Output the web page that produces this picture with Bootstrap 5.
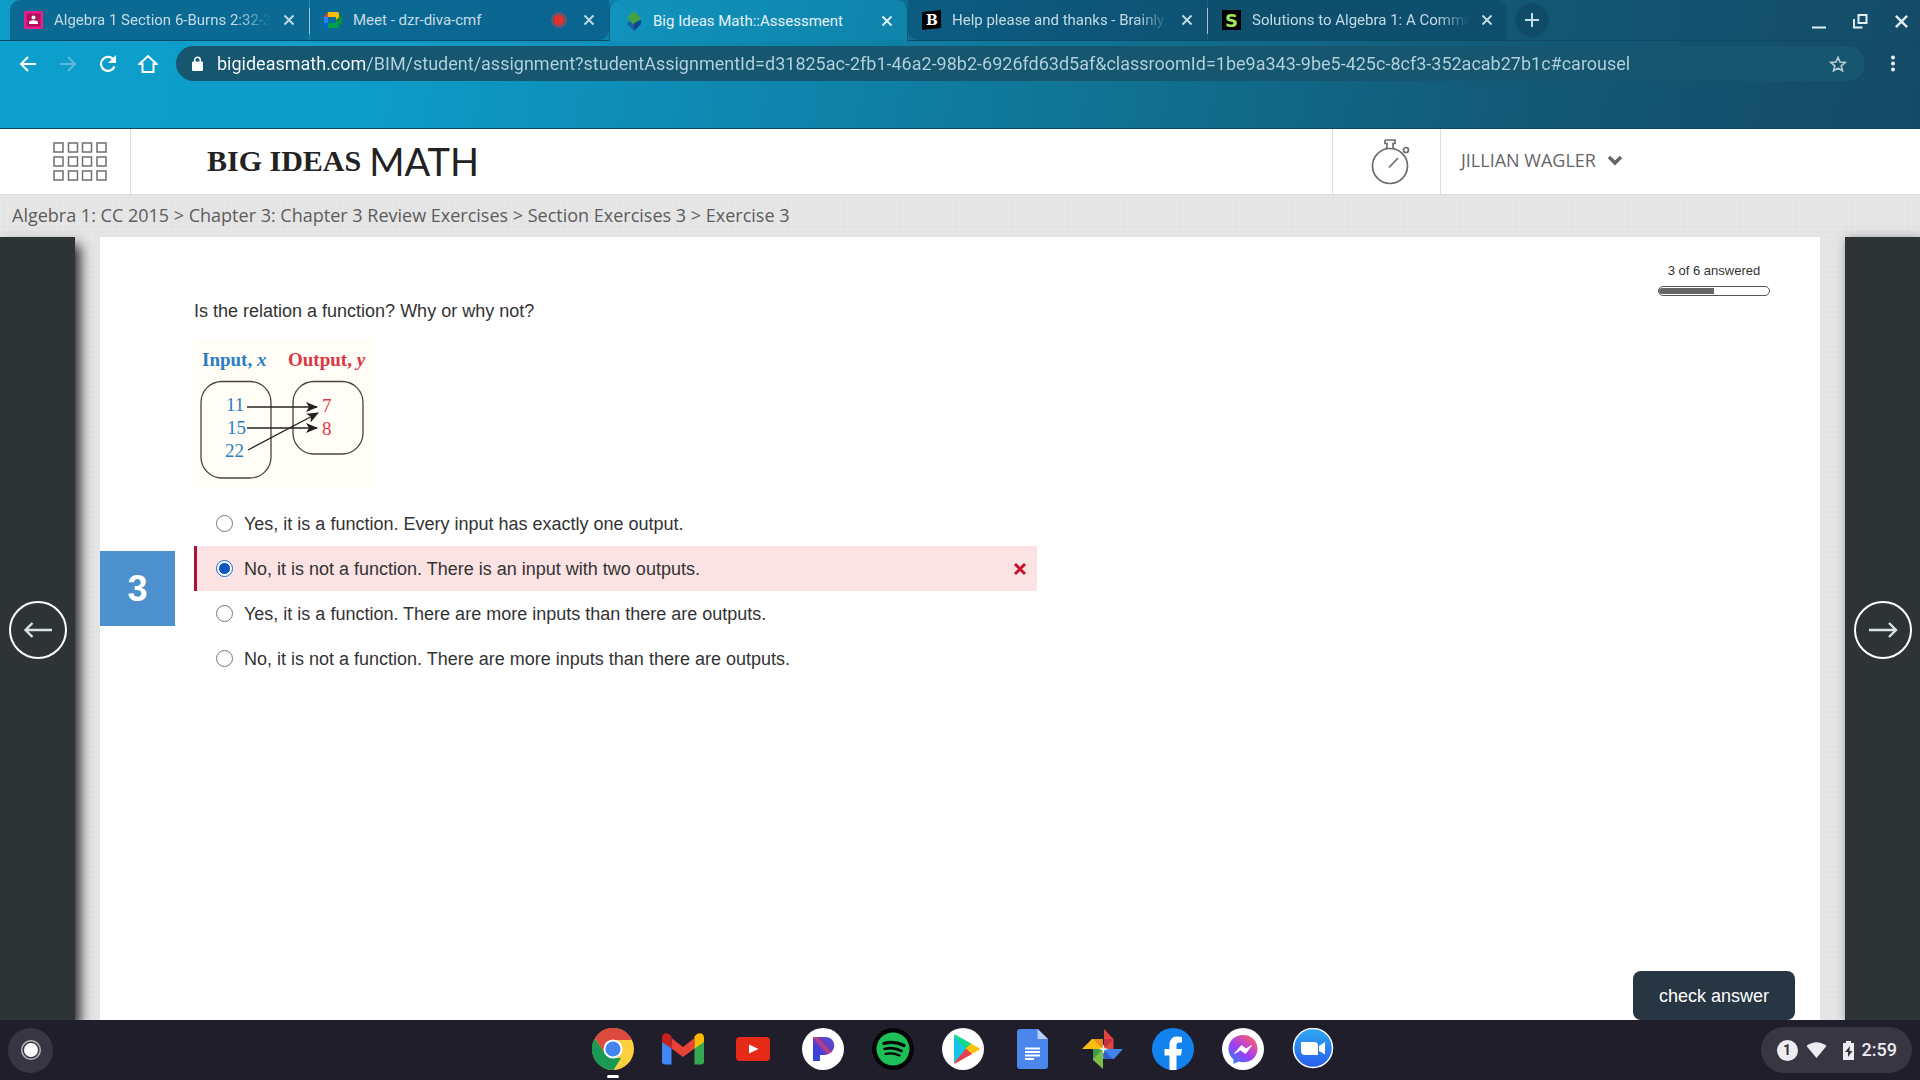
<!DOCTYPE html>
<html lang="en">
<head>
<meta charset="utf-8">
<meta name="viewport" content="width=device-width, initial-scale=1">
<title>Big Ideas Math::Assessment</title>
<link href="https://cdn.jsdelivr.net/npm/bootstrap@5.3.0/dist/css/bootstrap.min.css" rel="stylesheet">
<style>
  body { font-family: "Liberation Sans", Arial, sans-serif; font-size: 18px; line-height: 24px; color: #333; background: #fff; }
  svg { display: block; flex: none; }
  button { border: 0; background: none; padding: 0; color: inherit; }

  /* browser frame */
  .browser { font-family: Roboto, sans-serif; background: linear-gradient(100deg, #0d9fcc 0%, #0d9cc8 20%, #0f86ae 40%, #10708f 60%, #125a78 78%, #144a66 100%); border-bottom: 1px solid #12465c; }
  .tabstrip { height: 41px; padding-left: 10px; background: linear-gradient(90deg, rgba(20,80,110,.05), rgba(20,80,110,.35) 50%, rgba(20,80,110,.2)); border-bottom: 1px solid #0d4a66; }
  .tab-item { flex: 0 1 299px; min-width: 0; height: 40px; padding: 0 14px; background: #0b6a94; color: #c3dce6; }
  .tab-item.first { border-top-left-radius: 10px; }
  .tab-item.t-two { background: linear-gradient(90deg, #0b6a94, #0a6590); border-radius: 0 0 10px 0; }
  .tab-item.t-four { background: linear-gradient(90deg, #0c5c82, #0e5273); border-bottom-left-radius: 10px; }
  .tab-item.t-five { background: #0e4f6d; border-top-right-radius: 10px; }
  .tab-item.current { height: 41px; margin-bottom: -1px; padding-left: 16px; background: linear-gradient(100deg, #1093bd, #0f83aa); color: #e3f2f8; border-radius: 10px 10px 0 0; border: solid #0b5b7c; border-width: 0 1px; }
  .tab-link { flex: 1 1 0; min-width: 0; color: inherit; text-decoration: none; font-size: 15px; line-height: 20px; white-space: nowrap; margin-left: 11px; margin-right: 12px; }
  .tab-link.faded { -webkit-mask-image: linear-gradient(90deg, #000 85%, transparent); mask-image: linear-gradient(90deg, #000 85%, transparent); }
  .tab-rule { width: 1px; height: 26px; margin-top: 8px; background: #9fc3d1; }
  .newtab { width: 34px; height: 34px; margin: 3px 0 0 8px; border-radius: 50%; background: #0f4c68; }
  .win-controls { gap: 26px; margin-right: 11px; padding-top: 2px; color: #e0edf2; }
  .toolbar { height: 87px; padding: 5px 23px 0 18px; color: #fff; }
  .nav-icons { gap: 20px; height: 35px; margin-right: 18px; }
  .omnibox { height: 35px; border-radius: 18px; background: #17566f; padding: 0 18px 0 12px; }
  .url-field { flex: 1; min-width: 0; border: 0; outline: 0; padding: 0; margin-left: 14px; font-size: 18px; line-height: 24px; color: #b4d3df; -webkit-text-fill-color: transparent; background: linear-gradient(90deg, #fff 149px, #b4d3df 149px); -webkit-background-clip: text; background-clip: text; }

  /* site header */
  .site-header { height: 66px; background: #fff; border-bottom: 1px solid #ddd; font-family: "Open Sans", sans-serif; color: #666; }
  .apps-cell { width: 131px; border-right: 1px solid #ddd; padding-right: 0; padding-left: 30px; }
  .logo { margin-left: 76px; color: #222; text-decoration: none; padding-bottom: 2px; }
  .logo-serif { font: bold 30px/40px "Liberation Serif", serif; }
  .logo-sans { font: 400 38px/40px Lato, sans-serif; margin-left: 8px; }
  .timer-cell { width: 109px; border: solid #ddd; border-width: 0 1px; padding-left: 8px; }
  .user-cell { width: 479px; padding-left: 20px; padding-bottom: 4px; }
  .user-btn { font-size: 18px; line-height: 24px; color: #666; gap: 10px; }
  .trail { height: 42px; padding: 0 12px 2px; font-family: "Open Sans", sans-serif; font-size: 18px; color: #5c5c5c; }

  /* exercise area */
  .linen { background-color: #e4e4e4; background-image: repeating-linear-gradient(0deg, rgba(255,255,255,.1) 0 1px, transparent 1px 5px), repeating-linear-gradient(90deg, rgba(255,255,255,.1) 0 1px, transparent 1px 7px); }
  .side { width: 75px; padding-top: 2px; background: #2e3336; box-shadow: 5px 8px 12px #222; }
  .side-next { box-shadow: 2px 2px 10px rgba(60,65,75,.6); }
  .sheet { margin: 0 25px; background: #fff; }
  .num { width: 75px; height: 75px; margin-top: 314px; background: #4c90cd; color: #fff; font-size: 36px; font-weight: bold; }
  .work { margin-left: 19px; padding-top: 62px; }
  .figure-box { margin: 16px 0 13px; }
  .answers { width: 843px; max-width: 100%; }
  .answer { height: 45px; padding: 0 10px 0 19px; border-left: 3px solid transparent; }
  .answer.wrong { background: #fbe2e3; border-left-color: #a9123a; }
  .answer input { appearance: none; width: 17px; height: 17px; margin: 0 11px 0 0; border: 1px solid #767676; border-radius: 50%; background: #fff; flex: none; }
  .answer input:checked { border: 1px solid #1a6ad0; background: radial-gradient(circle, #0b57c0 5px, #fff 6px); }
  .tally { width: 112px; margin: 24px 50px 0 0; font-size: 13px; line-height: 20px; }
  .tally-bar { height: 10px; margin-top: 5px; border: 1px solid #555; border-radius: 5px; background: #fff; padding: 1px 0; }
  .tally-fill { background: #666; border-radius: 4px 0 0 4px; height: 100%; }
  .check-btn { width: 162px; height: 49px; margin-right: 25px; border-radius: 8px; background: #273642; color: #fff; }

  /* shelf */
  .shelf { height: 60px; padding: 0 8px; background: #201e2b; font-family: Roboto, sans-serif; }
  .launcher { width: 45px; height: 45px; border-radius: 50%; background: #393644; }
  .dock { gap: 28px; height: 60px; padding-left: 6px; padding-bottom: 2px; }
  .running { width: 12px; height: 3px; border-radius: 2px; background: #fff; left: 15px; top: 47px; }
  .tray { height: 46px; border-radius: 23px; background: #393644; color: #eeecf2; padding: 0 15px 0 16px; font-size: 18px; font-weight: 500; }
  .count { width: 21px; height: 21px; border-radius: 50%; background: #eeecf2; color: #333; font-size: 14px; line-height: 21px; font-weight: 700; }
</style>
<script src="https://cdn.jsdelivr.net/npm/bootstrap@5.3.0/dist/js/bootstrap.bundle.min.js"></script>
</head>
<body class="d-flex flex-column min-vh-100">

<svg width="0" height="0" class="position-absolute" aria-hidden="true">
  <symbol id="close" viewBox="0 0 12 12"><path d="M1.5 1.5l9 9M10.500 1.500l-9 9" stroke="currentColor" stroke-width="1.900"/></symbol>
</svg>

<header class="browser">
  <div class="tabstrip d-flex">
    <div class="tab-item first d-flex align-items-center">
      <svg width="19" height="18" viewBox="0 0 19 18"><rect width="19" height="18" rx="1" fill="#e91e8c"/><rect x="2.500" y="2.500" width="14" height="13" fill="#b0105f"/><circle cx="9.500" cy="6.500" r="2" fill="#fff"/><path d="M5 13v-1.500c0-3 9-3 9 0V13z" fill="#fff"/></svg>
      <a class="tab-link faded" href="#">Algebra 1 Section 6-Burns 2:32-3</a>
      <button aria-label="Close tab"><svg width="12" height="12"><use href="#close"/></svg></button>
    </div>
    <div class="tab-rule"></div>
    <div class="tab-item t-two d-flex align-items-center">
      <svg width="18" height="18" viewBox="0 0 18 18"><path d="M4 1h9a2 2 0 0 1 2 2v4l-3 2V6H4z" fill="#fbbc04"/><path d="M4 1v5H0z" fill="#ea4335"/><path d="M0 6h4v6H0z" fill="#2684fc"/><path d="M0 12h4v5H2a2 2 0 0 1-2-2z" fill="#0066da"/><path d="M4 12h8V9l3 2v4a2 2 0 0 1-2 2H4z" fill="#00a04a"/><path d="M12 9l5-5q1 0 1 1v8q0 1-1 1z" fill="#168a3c"/></svg>
      <a class="tab-link" href="#">Meet - dzr-diva-cmf</a>
      <svg class="me-3" width="16" height="16" viewBox="0 0 16 16"><circle cx="8" cy="8" r="7" fill="none" stroke="#8c5060" stroke-width="1.500"/><circle cx="8" cy="8" r="5.500" fill="#e0322a"/></svg>
      <button aria-label="Close tab"><svg width="12" height="12"><use href="#close"/></svg></button>
    </div>
    <div class="tab-item current d-flex align-items-center">
      <svg width="16" height="20" viewBox="0 0 16 20"><path d="M8 6l7 7-7 7-7-7z" fill="#1560a8"/><path d="M8 0l7 7-7 7-7-7z" fill="#45a243"/><path d="M8 12l7-3v4l-7 7z" fill="#0c4a8c"/></svg>
      <a class="tab-link" href="#" aria-current="page">Big Ideas Math::Assessment</a>
      <button aria-label="Close tab"><svg width="12" height="12"><use href="#close"/></svg></button>
    </div>
    <div class="tab-item t-four d-flex align-items-center">
      <svg width="19" height="20" viewBox="0 0 19 20"><path d="M0 2L19 0v18L0 20z" fill="#000"/><text x="4" y="15" font-family="DejaVu Serif" font-weight="bold" font-size="14" fill="#fff">B</text></svg>
      <a class="tab-link faded" href="#">Help please and thanks - Brainly.c</a>
      <button aria-label="Close tab"><svg width="12" height="12"><use href="#close"/></svg></button>
    </div>
    <div class="tab-rule"></div>
    <div class="tab-item t-five d-flex align-items-center">
      <svg width="19" height="20" viewBox="0 0 19 20"><path d="M0 0h19v20H0z" fill="#000"/><text x="3" y="17" font-family="DejaVu Sans" font-weight="bold" font-size="18" fill="#a5e65a">S</text></svg>
      <a class="tab-link faded" href="#">Solutions to Algebra 1: A Commo</a>
      <button aria-label="Close tab"><svg width="12" height="12"><use href="#close"/></svg></button>
    </div>
    <button class="newtab d-flex align-items-center justify-content-center" aria-label="New tab"><svg width="16" height="16" viewBox="0 0 16 16"><path d="M8 1v14M1 8h14" stroke="#c7dde6" stroke-width="2"/></svg></button>
    <div class="win-controls d-flex align-items-center ms-auto">
      <button aria-label="Minimize"><svg width="15" height="15" viewBox="0 0 15 15"><path d="M0 13.500h14" stroke="currentColor" stroke-width="2"/></svg></button>
      <button aria-label="Restore"><svg width="15" height="15" viewBox="0 0 15 15"><path d="M5.500 1h8v8h-8zM1 5v8.500h8.500" fill="none" stroke="currentColor" stroke-width="2"/></svg></button>
      <button aria-label="Close window"><svg width="15" height="15" viewBox="0 0 12 12"><use href="#close" width="12" height="12"/></svg></button>
    </div>
  </div>

  <div class="toolbar d-flex">
    <div class="nav-icons d-flex align-items-center">
      <button aria-label="Back"><svg width="20" height="20" viewBox="0 0 20 20" fill="none" stroke="#fff" stroke-width="2"><path d="M18 10H3M10 3l-7 7 7 7"/></svg></button>
      <button aria-label="Forward"><svg width="20" height="20" viewBox="0 0 20 20" fill="none" stroke="#5db9d9" stroke-width="2"><path d="M2 10h15M10 3l7 7-7 7"/></svg></button>
      <button aria-label="Reload"><svg width="20" height="20" viewBox="0 0 20 20"><path d="M16.500 12.500A7 7 0 1 1 15 5" fill="none" stroke="#fff" stroke-width="2.200"/><path d="M18 1v8h-8z" fill="#fff"/></svg></button>
      <button aria-label="Home"><svg width="20" height="20" viewBox="0 0 20 20"><path d="M1.500 10L10 2l8.500 8H15.500v8h-11v-8z" fill="none" stroke="#fff" stroke-width="2"/></svg></button>
    </div>
    <div class="omnibox d-flex align-items-center flex-grow-1">
      <svg class="ms-1" width="11" height="16" viewBox="0 0 11 16"><rect y="5.500" width="11" height="9.500" rx="1.200" fill="#fff"/><path d="M2.700 6V4a2.800 2.800 0 0 1 5.600 0v2" fill="none" stroke="#fff" stroke-width="1.500"/></svg>
      <input class="url-field" type="text" aria-label="Address" value="bigideasmath.com/BIM/student/assignment?studentAssignmentId=d31825ac-2fb1-46a2-98b2-6926fd63d5af&amp;classroomId=1be9a343-9be5-425c-8cf3-352acab27b1c#carousel">
      <button class="ms-2" aria-label="Bookmark"><svg width="18" height="18" viewBox="0 0 24 24"><path d="M12 3l2.700 6.300 6.800.6-5.200 4.500 1.600 6.700L12 17.500l-5.900 3.600 1.600-6.700L2.500 9.900l6.800-.6z" fill="none" stroke="#b9cdd5" stroke-width="2.200"/></svg></button>
    </div>
    <button class="ms-4 align-self-start" aria-label="Menu"><svg width="8" height="35" viewBox="0 0 8 35" fill="#e8f3f7"><circle cx="4" cy="11.500" r="2"/><circle cx="4" cy="17.500" r="2"/><circle cx="4" cy="23.500" r="2"/></svg></button>
  </div>
</header>

<div class="site-header d-flex">
  <div class="apps-cell d-flex align-items-center justify-content-center">
    <button aria-label="Programs"><svg width="54" height="40" viewBox="0 0 54 40" fill="none" stroke="#6f6f6f" stroke-width="1.500"><path d="M1 1h9v9H1zM15.500 1h9v9h-9zM29.500 1h9v9h-9zM44 1h9v9h-9zM1 15h9v9H1zM15.500 15h9v9h-9zM29.500 15h9v9h-9zM44 15h9v9h-9zM1 29h9v9H1zM15.500 29h9v9h-9zM29.500 29h9v9h-9zM44 29h9v9h-9z"/></svg></button>
  </div>
  <a class="logo d-flex align-items-center" href="#"><span class="logo-serif">BIG IDEAS</span><span class="logo-sans">MATH</span></a>
  <div class="timer-cell d-flex align-items-center justify-content-center ms-auto">
    <button aria-label="Timer"><svg width="40" height="46" viewBox="0 0 40 46" fill="none" stroke="#6c6c6c" stroke-width="1.700"><circle cx="19" cy="27" r="17.500"/><path d="M14 1h10v3.500h-2V8q0 1 1.500 2M14 1v3.500h2V8q0 1-1.500 2M18 28.500l9-9.500"/><circle cx="35" cy="11" r="2.500"/></svg></button>
  </div>
  <div class="user-cell d-flex align-items-center">
    <button class="user-btn d-flex align-items-center">JILLIAN WAGLER<svg width="18" height="12" viewBox="0 0 18 12"><path d="M3 3l6 6 6-6" fill="none" stroke="#666" stroke-width="3.500"/></svg></button>
  </div>
</div>

<main class="linen d-flex flex-column flex-grow-1 overflow-hidden">
  <div class="trail d-flex align-items-center">Algebra 1: CC 2015 &gt; Chapter 3: Chapter 3 Review Exercises &gt; Section Exercises 3 &gt; Exercise 3</div>
  <div class="d-flex flex-grow-1">
    <div class="side d-flex align-items-center justify-content-center flex-shrink-0">
      <button aria-label="Previous exercise"><svg width="58" height="58" viewBox="0 0 58 58" fill="none" stroke="#fff" stroke-width="2"><circle cx="29" cy="29" r="28"/><path d="M43 29H16M23.500 22l-7 7 7 7" stroke="#dde3e4" stroke-width="2.400"/></svg></button>
    </div>
    <section class="sheet d-flex flex-grow-1">
      <div class="num d-flex align-items-center justify-content-center flex-shrink-0">3</div>
      <div class="work flex-grow-1">
        <div>Is the relation a function? Why or why not?</div>
        <svg class="figure-box" width="181" height="149" viewBox="0 0 181 149" role="img" aria-label="Mapping diagram from inputs to outputs">
          <defs><marker id="tip" viewBox="0 0 12 10" refX="11" refY="5" markerWidth="12" markerHeight="10" markerUnits="userSpaceOnUse" orient="auto"><path d="M0 0l12 5-12 5 3-5z" fill="#222"/></marker></defs>
          <rect width="181" height="149" fill="#fffdf6"/>
          <g font-family="Liberation Serif" font-weight="bold" font-size="19">
            <text x="8" y="27" fill="#2a7fc4">Input, <tspan font-style="italic">x</tspan></text>
            <text x="94" y="27" fill="#dc3545">Output, <tspan font-style="italic">y</tspan></text>
          </g>
          <g fill="none" stroke="#444" stroke-width="1.300">
            <rect x="7" y="42.500" width="70" height="96.500" rx="21"/>
            <rect x="99" y="42.500" width="70" height="72.500" rx="21"/>
          </g>
          <g font-family="Liberation Serif" font-size="19">
            <g fill="#2a7fc4"><text x="32" y="72">11</text><text x="33" y="95">15</text><text x="31" y="118">22</text></g>
            <g fill="#dc3545"><text x="128" y="73">7</text><text x="128" y="96">8</text></g>
          </g>
          <g stroke="#222" stroke-width="1.300"><path d="M53 68h70" marker-end="url(#tip)"/><path d="M53 89h70" marker-end="url(#tip)"/><path d="M54 111L124 74" marker-end="url(#tip)"/></g>
        </svg>
        <div class="answers">
          <label class="answer d-flex align-items-center"><input type="radio" name="answer">Yes, it is a function. Every input has exactly one output.</label>
          <label class="answer wrong d-flex align-items-center"><input type="radio" name="answer" checked>No, it is not a function. There is an input with two outputs.<svg class="ms-auto" width="14" height="14" viewBox="0 0 14 14"><path d="M2 2l10 10M12 2L2 12" stroke="#c4122f" stroke-width="3"/></svg></label>
          <label class="answer d-flex align-items-center"><input type="radio" name="answer">Yes, it is a function. There are more inputs than there are outputs.</label>
          <label class="answer d-flex align-items-center"><input type="radio" name="answer">No, it is not a function. There are more inputs than there are outputs.</label>
        </div>
      </div>
      <div class="d-flex flex-column align-items-end flex-shrink-0">
        <div class="tally text-center">3 of 6 answered
          <div class="tally-bar" role="progressbar" aria-label="Answered" aria-valuenow="3" aria-valuemin="0" aria-valuemax="6"><div class="tally-fill" style="width:50%"></div></div>
        </div>
        <button class="check-btn mt-auto">check answer</button>
      </div>
    </section>
    <div class="side side-next d-flex align-items-center justify-content-center flex-shrink-0">
      <button aria-label="Next exercise"><svg width="58" height="58" viewBox="0 0 58 58" fill="none" stroke="#fff" stroke-width="2"><circle cx="29" cy="29" r="28"/><path d="M15 29h27M35 22l7 7-7 7" stroke="#dde3e4" stroke-width="2.400"/></svg></button>
    </div>
  </div>
</main>

<footer class="shelf d-flex align-items-center position-relative">
  <div class="col d-flex"><button class="launcher d-flex align-items-center justify-content-center" aria-label="Launcher"><svg width="22" height="22" viewBox="0 0 22 22"><circle cx="11" cy="11" r="9.300" fill="none" stroke="#b8b6be" stroke-width="1.500"/><circle cx="11" cy="11" r="7" fill="#fff"/></svg></button></div>
  <nav class="dock d-flex align-items-center" aria-label="Apps">
    <a href="#" aria-label="Chrome" class="position-relative">
      <svg width="42" height="42" viewBox="0 0 42 42"><circle cx="21" cy="21" r="21" fill="#fdd03f"/><path d="M2.800 10.500A21 21 0 0 1 39.200 10.500L39.800 12H21l-7.800 13.500z" fill="#dc4a3d"/><path d="M2.800 10.500L13.200 25.500 21 30h8L21.500 42A21 21 0 0 1 2.800 10.500z" fill="#1a9a55"/><circle cx="21" cy="21" r="9.500" fill="#fff"/><circle cx="21" cy="21" r="7.600" fill="#4484ee"/></svg>
      <span class="running position-absolute"></span>
    </a>
    <a href="#" aria-label="Gmail"><svg width="42" height="42" viewBox="0 0 42 42"><path d="M0 14v19.500q0 3 3 3h6.500V17z" fill="#4285f4"/><path d="M42 14v19.500q0 3-3 3h-6.500V17z" fill="#34a853"/><path d="M9.500 10L21 19l11.500-9v10.500L21 29 9.500 20.500z" fill="#ea4335"/><path d="M0 9.500C0 5.500 4.500 4 7.500 6.500l2 2v12L0 14z" fill="#c5221f"/><path d="M42 9.500c0-4-4.500-5.500-7.500-3l-2 2v12L42 14z" fill="#fbbc04"/></svg></a>
    <a href="#" aria-label="YouTube"><svg width="42" height="42" viewBox="0 0 42 42"><rect x="4" y="9" width="34" height="24" rx="4" fill="#e62a18"/><path d="M17 16.500l9.500 4.500-9.500 4.500z" fill="#fff"/></svg></a>
    <a href="#" aria-label="Pandora"><svg width="42" height="42" viewBox="0 0 42 42"><defs><linearGradient id="pan" x1="0" y1="1" x2="1" y2="0"><stop offset="0" stop-color="#2546e0"/><stop offset=".42" stop-color="#4b3fd5"/><stop offset=".55" stop-color="#c8407e"/><stop offset=".65" stop-color="#6a3cbf"/><stop offset="1" stop-color="#3f5be0"/></linearGradient></defs><circle cx="21" cy="21" r="21" fill="#fff"/><path d="M11 9h12c13 0 12 18-1 18h-4v6h-7z" fill="url(#pan)"/></svg></a>
    <a href="#" aria-label="Spotify"><svg width="42" height="42" viewBox="0 0 42 42"><circle cx="21" cy="21" r="21" fill="#050505"/><circle cx="21" cy="21" r="16.500" fill="#1fbf58"/><g fill="none" stroke="#050505" stroke-linecap="round"><path d="M12 15.500q10-3 20 2" stroke-width="3.200"/><path d="M12.500 21q9-2.500 17 2" stroke-width="2.600"/><path d="M13.500 26q7-2 14 1.500" stroke-width="2.200"/></g></svg></a>
    <a href="#" aria-label="Play Store"><svg width="42" height="42" viewBox="0 0 42 42"><circle cx="21" cy="21" r="21" fill="#fff"/><path d="M12 7v28l13-14z" fill="#13c6ea"/><path d="M12 7q1-1 3 .5L30 16l-6 6z" fill="#16d88a"/><path d="M29 15.500l8 4.500q1.500 1 0 2l-8 4.500-6-5.500z" fill="#fbc40a"/><path d="M12 35q1 1 3-.500L30 26l-6-5.500z" fill="#ea3d50"/></svg></a>
    <a href="#" aria-label="Docs"><svg width="42" height="42" viewBox="0 0 42 42"><path d="M8 1h18l10 10v27q0 3-3 3H8q-3 0-3-3V4q0-3 3-3z" fill="#4a86ec"/><path d="M25.500 1L36 11H25.500z" fill="#b8d0f8"/><path d="M13 20.500h15M13 24h15M13 27.500h15M13 31h9" stroke="#fff" stroke-width="1.800"/></svg></a>
    <a href="#" aria-label="Photos"><svg width="42" height="42" viewBox="0 0 42 42"><path d="M22 1l9.500 10v10H22z" fill="#e2443c"/><path d="M22 11h9.500L22 21z" fill="#c13043"/><path d="M41 21L32 31H21V21z" fill="#4383ee"/><path d="M21 21l10 10h-9z" fill="#3360c0"/><path d="M21 41l-10-9V21h10z" fill="#7cbf45"/><path d="M11 21h10L11 31z" fill="#3f9a4c"/><path d="M0 21l10-10h11v10z" fill="#fbbf13"/><path d="M11 11l10 10V11z" fill="#ec8e22"/><path d="M21.500 16l1 4 4 1-4 1-1 4-1-4-4-1 4-1z" fill="#fff"/></svg></a>
    <a href="#" aria-label="Facebook"><svg width="42" height="42" viewBox="0 0 42 42"><circle cx="21" cy="21" r="21" fill="#1283ee"/><path d="M17.500 42V27.500h-5V21h5v-4c0-6 3.500-8.500 8-8.500q2.500 0 4.500.5v5.500h-2.500c-2.500 0-3 1.200-3 3V21h5.500l-1 6.500h-4.500V42z" fill="#fff"/></svg></a>
    <a href="#" aria-label="Messenger"><svg width="42" height="42" viewBox="0 0 42 42"><defs><linearGradient id="msg" x1="0" y1="1" x2=".8" y2="0"><stop offset="0" stop-color="#1a8cff"/><stop offset=".5" stop-color="#a03cf5"/><stop offset="1" stop-color="#ff5f6d"/></linearGradient></defs><circle cx="21" cy="21" r="21" fill="#fff"/><path d="M21 7C12 7 6.500 13.500 6.500 21c0 4.500 2 8 5 10.500V36l5-2.500q2 .8 4.500.8c9 0 14.500-6 14.500-13.500S30 7 21 7z" fill="url(#msg)"/><path d="M12.500 25.500l7-8 4.500 3.500 5.500-3.500-6 8-5-3.500z" fill="#fff" stroke="#fff" stroke-linejoin="round"/></svg></a>
    <a href="#" aria-label="Zoom"><svg width="42" height="42" viewBox="0 0 42 42"><defs><linearGradient id="zm" x2="0" y2="1"><stop stop-color="#2daaf2"/><stop offset="1" stop-color="#2a5cf0"/></linearGradient></defs><circle cx="21" cy="20" r="19.500" fill="url(#zm)" stroke="#fff" stroke-width="1.500"/><path d="M9 14h13q4 0 4 4v9H13q-4 0-4-4zM27 18l6-4v12.500L27 23z" fill="#fff"/></svg></a>
  </nav>
  <div class="col d-flex justify-content-end">
    <div class="tray d-flex align-items-center">
      <span class="count text-center">1</span>
      <svg class="ms-2" width="21" height="16" viewBox="0 0 21 16"><path d="M.5 4Q10.500-3.500 20.500 4L10.500 16z" fill="#eeecf2"/></svg>
      <svg class="ms-3 me-2" width="11" height="19" viewBox="0 0 11 19"><path d="M3 0h5v2h3v17H0V2h3z" fill="#eeecf2"/><path d="M7 5l-5 6h3v5l4.500-6H6.500z" fill="#393644"/></svg>
      <time>2:59</time>
    </div>
  </div>
</footer>
</body>
</html>
